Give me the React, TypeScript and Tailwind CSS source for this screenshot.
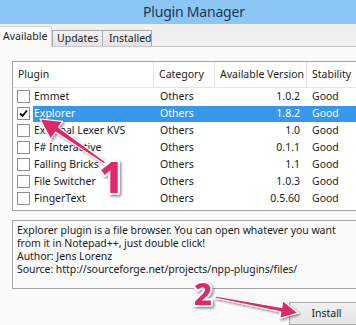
import React from "react";

const rows = [
  { name: "Emmet", ver: "1.0.2", checked: false, sel: false },
  { name: "Explorer", ver: "1.8.2", checked: true, sel: true },
  { name: "External Lexer KVS", ver: "1.0", checked: false, sel: false },
  { name: "F# Interactive", ver: "0.1.1", checked: false, sel: false },
  { name: "Falling Bricks", ver: "1.1", checked: false, sel: false },
  { name: "File Switcher", ver: "1.0.3", checked: false, sel: false },
  { name: "FingerText", ver: "0.5.60", checked: false, sel: false },
];

function Check({ on }: { on: boolean }) {
  return (
    <div className="w-[13px] h-[13px] border border-[#8f8f8f] bg-white flex items-center justify-center">
      {on && (
        <svg width="9" height="9" viewBox="0 0 9 9">
          <path d="M1 4.5 L3.5 7 L8 1.5" fill="none" stroke="#000" strokeWidth="1.8" />
        </svg>
      )}
    </div>
  );
}

export default function App() {
  return (
    <div className="relative w-[356px] h-[325px] overflow-hidden bg-[#f0f0f0] font-['Noto_Sans',sans-serif] text-[10.5px] text-[#1a1a1a]">
      {/* title bar */}
      <div className="h-[24px] bg-[#8cc6f4] flex items-center pl-[143px]">
        <span className="text-[14px] tracking-[-0.2px] text-[#1f3550] leading-none">Plugin Manager</span>
      </div>
      {/* tabs */}
      <div className="h-[23px] flex items-end border-b border-[#c9c9c9]">
        <div className="h-[21px] w-[53px] -ml-px -mb-px bg-[#fafafa] border border-b-0 border-[#d0d0d0] flex items-center pl-[3px] relative z-10">
          Available
        </div>
        <div className="h-[16px] w-[51px] bg-gradient-to-b from-[#f2f2f2] to-[#e3e3e3] border border-b-0 border-[#acacac] flex items-center pl-[4px]">
          Updates
        </div>
        <div className="h-[16px] w-[50px] -ml-px bg-gradient-to-b from-[#f2f2f2] to-[#e3e3e3] border border-b-0 border-[#acacac] flex items-center pl-[6px]">
          Installed
        </div>
      </div>
      {/* panel */}
      <div className="bg-[#fafafa] h-[278px] flex flex-col">
        {/* list */}
        <div className="ml-[12px] mt-[14px] w-[360px] h-[151px] border border-[#a3a3a3] bg-white flex flex-col">
          <div className="h-[26px] border-b border-[#e5e5e5] flex text-[#222]">
            <div className="w-[141px] border-r border-[#e5e5e5] pl-[5px] flex items-center">Plugin</div>
            <div className="w-[61px] border-r border-[#e5e5e5] pl-[5px] flex items-center">Category</div>
            <div className="w-[92px] border-r border-[#e5e5e5] pl-[5px] flex items-center">Available Version</div>
            <div className="flex-1 pl-[5px] flex items-center">Stability</div>
          </div>
          {rows.map((r) => (
            <div key={r.name} className="h-[17px] flex items-center">
              <div className="w-[20px] pl-[4px] flex items-center">
                <Check on={r.checked} />
              </div>
              <div className={`flex-1 h-[16px] flex items-center ${r.sel ? "bg-[#3797eb] text-white" : ""}`}>
                <div className="w-[121px] pl-[1px] whitespace-nowrap">{r.name}</div>
                <div className="w-[61px] pl-[6px]">Others</div>
                <div className="w-[92px] pr-[7px] text-right">{r.ver}</div>
                <div className="flex-1 pl-[5px]">Good</div>
              </div>
            </div>
          ))}
        </div>
        {/* description */}
        <div className="ml-[12px] mt-[9px] w-[360px] h-[70px] border border-[#a3a3a3] bg-[#fafafa] pl-[4px] pt-[3px] leading-[13px] whitespace-nowrap tracking-[-0.05px]">
          <div>Explorer plugin is a file browser. You can open whatever you want</div>
          <div>from it in Notepad++, just double click!</div>
          <div>Author: Jens Lorenz</div>
          <div>Source: http://sourceforge.net/projects/npp-plugins/files/</div>
        </div>
        {/* install button */}
        <div className="ml-[289px] mt-[13px] w-[75px] h-[23px] border border-[#acacac] bg-gradient-to-b from-[#f0f0f0] to-[#e5e5e5] flex items-center justify-center">
          Install
        </div>
      </div>
      {/* annotations */}
      <svg className="absolute left-0 top-0 pointer-events-none" width="356" height="325" viewBox="0 0 356 325">
        <defs>
          <filter id="sh" x="-20%" y="-20%" width="140%" height="140%">
            <feDropShadow dx="1.5" dy="1.5" stdDeviation="1.2" floodColor="#000" floodOpacity="0.45" />
          </filter>
        </defs>
        <g filter="url(#sh)" fill="#e2266a" stroke="#fff" strokeWidth="1.2" strokeLinejoin="round">
          <polygon points="105.8,161.9 58.5,127.2 62.6,121.4 40,119 50.6,139.2 55.7,132.2 104.2,164.1" />
          <polygon points="215.2,296 281.8,307.4 282.8,300.6 298,313 279.8,318.4 280.8,311.9 214.8,298" />
        </g>
        <g filter="url(#sh)" fontFamily="'Noto Sans', sans-serif" fontWeight="800" fill="#e2266a" stroke="#fff" strokeWidth="4" paintOrder="stroke" strokeLinejoin="round">
          <text x="99" y="193" fontSize="43">1</text>
          <text x="194" y="305" fontSize="31">2</text>
        </g>
      </svg>
    </div>
  );
}
